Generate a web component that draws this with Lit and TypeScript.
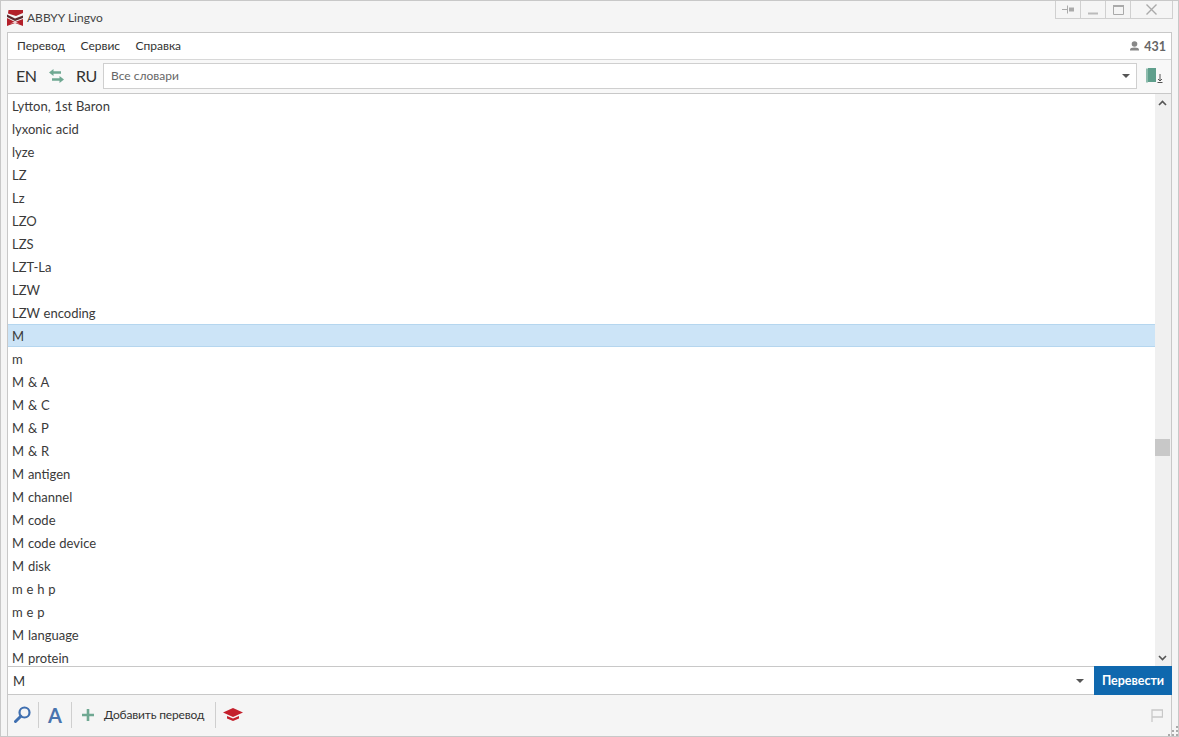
import { LitElement, html, css, svg } from "lit";
import { customElement } from "lit/decorators.js";

const WORDS = ["Lytton, 1st Baron","lyxonic acid","lyze","LZ","Lz","LZO","LZS","LZT-La","LZW","LZW encoding","M","m","M & A","M & C","M & P","M & R","M antigen","M channel","M code","M code device","M disk","m e h p","m e p","M language","M protein"];

@customElement("app-root")
export class AppRoot extends LitElement {
  static styles = css`
    :host { display: block; width: 1179px; height: 737px; font-family: Lato, "Open Sans", sans-serif; color: #333; overflow: hidden; }
    .win { box-sizing: border-box; width: 1179px; height: 737px; border: 1px solid #c8c8c8; background: #f5f5f5; display: flex; flex-direction: column; position: relative; }
    .title { height: 31px; flex: none; display: flex; align-items: center; padding: 0 0 0 6px; gap: 4px; font-size: 12px; color: #444; position: relative; }
    .title .logo { display: block; margin-top: 2px; }
    .title span { margin-top: 2px; }
    .winbtns { position: absolute; top: 0; right: 5px; display: flex; height: 17px; border: 1px solid #d0d0d0; border-top: none; background: #f5f5f5; }
    .winbtns div { box-sizing: border-box; display: flex; align-items: center; justify-content: center; border-left: 1px solid #d0d0d0; height: 100%; width: 25px; }
    .winbtns div:first-child { border-left: none; width: 24px; }
    .winbtns div:last-child { width: 42px; }
    .main { flex: 1; margin: 0 6px 0 6px; display: flex; flex-direction: column; min-height: 0; border-left: 1px solid #c8c8c8; border-top: 1px solid #c8c8c8; border-right: 1px solid #c8c8c8; }
    .menu { height: 27px; flex: none; box-sizing: border-box; background: #fff; border-bottom: 1px solid #d8d8d8; display: flex; align-items: center; padding: 0 5px 2px 9px; gap: 15.5px; font-size: 12px; color: #333; }
    .count { margin-left: auto; display: flex; align-items: center; gap: 4px; font-weight: 700; font-size: 12.5px; color: #666; margin-top: 2px; }
    .bar { height: 34px; flex: none; box-sizing: border-box; background: #f8f8f8; border-bottom: 1px solid #c8c8c8; display: flex; align-items: center; padding: 0 0 2px 8px; font-size: 16px; color: #333; }
    .lang { display: block; letter-spacing: -0.5px; }
    .en { width: 33px; }
    .ru { width: 27px; }
    .swap { margin-right: 12px; display: block; flex: none; }
    .dict { width: 1034px; height: 26px; flex: none; box-sizing: border-box; border: 1px solid #cfcfcf; background: #fff; display: flex; align-items: center; padding: 0 6px 0 7px; font-size: 12px; color: #666; justify-content: space-between; }
    .caret { width: 0; height: 0; border-left: 4px solid transparent; border-right: 4px solid transparent; border-top: 4px solid #555; }
    .book { margin-left: 9px; display: block; flex: none; }
    .listwrap { flex: 1; min-height: 0; display: flex; background: #fff; }
    .list { flex: 1; overflow: hidden; min-width: 0; }
    .row { height: 23px; line-height: 23px; box-sizing: border-box; padding: 1px 0 0 4px; font-size: 13px; word-spacing: 0.5px; color: #3a3a3a; white-space: nowrap; }
    .row.sel { background: #cce4f7; border-top: 1px solid #b5d6ef; border-bottom: 1px solid #b5d6ef; line-height: 23px; padding-top: 0; }
    .scroll { width: 16px; flex: none; background: #f0f0f0; position: relative; }
    .arrow { position: absolute; left: 0; width: 15px; height: 17px; display: flex; align-items: center; justify-content: center; }
    .arrow.up { top: 0; } .arrow.down { bottom: 0; }
    .thumb { position: absolute; left: 0; top: 345px; width: 15px; height: 17px; background: #c8c8c8; }
    .input { height: 29px; flex: none; box-sizing: border-box; display: flex; border-top: 1px solid #c8c8c8; border-bottom: 1px solid #c8c8c8; background: #fff; margin-right: -1px; }
    .input .txt { flex: 1; display: flex; align-items: center; padding-left: 5px; font-size: 13px; color: #333; }
    .input .dd { display: flex; align-items: center; padding-right: 10px; }
    .go { width: 78px; background: #0f68ae; color: #fff; font-weight: 700; font-size: 12.5px; display: flex; align-items: center; justify-content: center; margin: -1px 0; height: 29px; flex: none; }
    .tools { height: 41px; flex: none; box-sizing: border-box; padding-bottom: 2px; display: flex; align-items: center; font-size: 12px; color: #333; position: relative; margin-right: -1px; }
    .sep { width: 1px; height: 26px; background: #cfcfcf; flex: none; }
    .tools svg { display: block; flex: none; }
    .s1 { margin-left: 7px; }
    .s2 { margin-left: 9px; }
    .s3 { margin-left: 11px; }
    .bigA { font-size: 20px; font-weight: 700; color: #4a74ae; margin-left: 9px; width: 14px; line-height: 26px; }
    .add { margin-left: 10px; width: 100px; letter-spacing: -0.15px; white-space: nowrap; }
    .flag { position: absolute; right: 9px; top: 14px; }
    .grip { position: absolute; right: 0; bottom: 0; width: 11px; height: 11px; }
    .ic-s { margin-left: 6px; }
    .ic-p { margin-left: 10px; }
    .ic-c { margin-left: 7px; }
  `;

  render() {
    return html`<div class="win">
      <div class="title">
        <svg class="logo" width="16" height="16" viewBox="0 0 16 16">
          <path d="M1.5 0H16V3L9 6L1 3.5Z" fill="#b3202a"/>
          <path d="M0 4.5L8 8.5L16 5.5V8L8 11L0 7Z" fill="#5a2a2e"/>
          <path d="M0 8L8 12L16 9V16L8 13L0 16Z" fill="#b3202a"/>
          <path d="M3 13.5L8 11.8L12.5 13.5L8 12.8Z" fill="#fff"/>
        </svg>
        <span>ABBYY Lingvo</span>
        <div class="winbtns">
          <div>${svg`<svg width="12" height="9" viewBox="0 0 12 9"><path d="M0 4.5H5" stroke="#aaa"/><path d="M5.5 0.5V8.5" stroke="#aaa"/><path d="M7 2.5H12V6.5H7Z" fill="#aaa"/></svg>`}</div>
          <div>${svg`<svg width="10" height="10" viewBox="0 0 10 10"><path d="M0 8.5H10" stroke="#bbb" stroke-width="2"/></svg>`}</div>
          <div>${svg`<svg width="11" height="10" viewBox="0 0 11 10"><path d="M.5 1.5H10.5V9.5H.5Z" stroke="#aaa" fill="none"/><path d="M0 1H11" stroke="#aaa" stroke-width="2"/></svg>`}</div>
          <div>${svg`<svg width="11" height="11" viewBox="0 0 11 11"><path d="M.5 .5L10.5 10.5M10.5 .5L.5 10.5" stroke="#aaa" stroke-width="1.4"/></svg>`}</div>
        </div>
      </div>
      <div class="main">
        <div class="menu"><span>Перевод</span><span>Сервис</span><span>Справка</span>
          <div class="count">
            ${svg`<svg width="11" height="10" viewBox="0 0 11 10"><circle cx="5.5" cy="3" r="2.8" fill="#888"/><path d="M1 9.5H10V8.5Q10 6.5 5.5 6.5Q1 6.5 1 8.5Z" fill="#888"/></svg>`}
            <span>431</span>
          </div>
        </div>
        <div class="bar">
          <span class="lang en">EN</span>
          ${svg`<svg class="swap" width="15" height="14" viewBox="0 0 15 14"><path d="M0 3.5L4.5 0V2.3H12V4.7H4.5V7Z" fill="#6fa892"/><path d="M15 10.5L10.5 7V9.3H3V11.7H10.5V14Z" fill="#6fa892"/></svg>`}
          <span class="lang ru">RU</span>
          <div class="dict"><span>Все словари</span><div class="caret"></div></div>
          ${svg`<svg class="book" width="18" height="15" viewBox="0 0 18 15"><path d="M0 0.5H2V14.5H0Z" fill="#8dbcad"/><path d="M2 0H10V14H2Z" fill="#5f9f8c"/><path d="M14 6V13M12 11L14 13L16 11M11.5 14.5H16.5" stroke="#555" fill="none"/></svg>`}
        </div>
        <div class="listwrap">
          <div class="list">${WORDS.map((w) => html`<div class="row ${w === "M" ? "sel" : ""}">${w}</div>`)}</div>
          <div class="scroll">
            <div class="arrow up">${svg`<svg width="9" height="6" viewBox="0 0 9 6"><path d="M1 5L4.5 1.5L8 5" stroke="#555" stroke-width="1.6" fill="none"/></svg>`}</div>
            <div class="thumb"></div>
            <div class="arrow down">${svg`<svg width="9" height="6" viewBox="0 0 9 6"><path d="M1 1L4.5 4.5L8 1" stroke="#555" stroke-width="1.6" fill="none"/></svg>`}</div>
          </div>
        </div>
        <div class="input">
          <div class="txt">M</div>
          <div class="dd"><div class="caret"></div></div>
          <div class="go">Перевести</div>
        </div>
        <div class="tools">
          ${svg`<svg class="ic-s" width="17" height="17" viewBox="0 0 17 17"><circle cx="10.5" cy="6.5" r="5" stroke="#3f6fb0" stroke-width="2.2" fill="none"/><path d="M6.8 10.2L1.5 15.5" stroke="#3f6fb0" stroke-width="3" stroke-linecap="round"/></svg>`}
          <div class="sep s1"></div>
          <span class="bigA">A</span>
          <div class="sep s2"></div>
          ${svg`<svg class="ic-p" width="12" height="12" viewBox="0 0 12 12"><path d="M6 0V12M0 6H12" stroke="#6fa892" stroke-width="2.6"/></svg>`}
          <span class="add">Добавить перевод</span>
          <div class="sep s3"></div>
          ${svg`<svg class="ic-c" width="20" height="13" viewBox="0 0 20 13"><path d="M10 0L20 4.5L10 9L0 4.5Z" fill="#c4202c"/><path d="M4 8L10 10.5L16 8V10.5L10 13L4 10.5Z" fill="#c4202c"/></svg>`}
          ${svg`<svg class="flag" width="12" height="13" viewBox="0 0 12 13"><path d="M1 13V1H11.5V8H1" stroke="#c8c8c8" stroke-width="1.3" fill="none"/></svg>`}
        </div>
      </div>
      <svg class="grip" viewBox="0 0 11 11"><path d="M9 1h2v2h-2zM5 5h2v2h-2zM9 5h2v2h-2zM1 9h2v2h-2zM5 9h2v2h-2zM9 9h2v2h-2z" fill="#aaa"/></svg>
    </div>`;
  }
}
